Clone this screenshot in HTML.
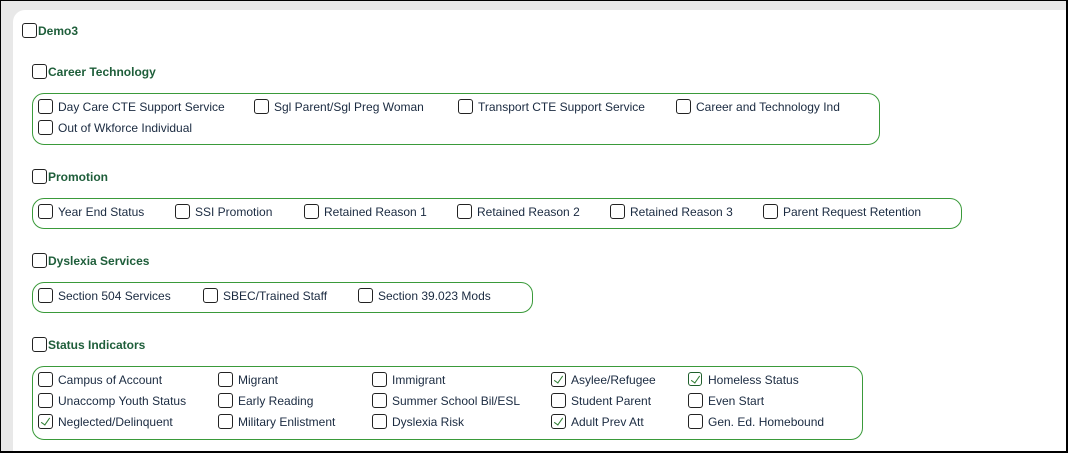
<!DOCTYPE html>
<html><head><style>
html,body{margin:0;padding:0}
body{width:1068px;height:453px;position:relative;overflow:hidden;background:#e8e8e8;font-family:"Liberation Sans",sans-serif;}
.frame{position:absolute;left:0;top:0;border:1px solid #000;border-right:2px solid #000;border-bottom:2px solid #000;box-sizing:border-box;width:1068px;height:453px;}
.panel{position:absolute;left:13px;top:10px;width:1053px;height:441px;background:#fff;border-top-left-radius:12px;}
.cb{position:absolute;width:13px;height:13px;border:1px solid #222;border-radius:3px;background:#fff;}
.cb.on::after{content:"";position:absolute;left:4px;top:1px;width:4px;height:8px;border:solid #2e7d32;border-width:0 1.5px 1.5px 0;transform:rotate(35deg);}
.cb.dk{border-color:#1e5e2a;border-width:1.5px;width:12px;height:12px}
.h{position:absolute;font-size:12px;font-weight:bold;color:#1e5e3a;line-height:14px}
.l{position:absolute;font-size:12px;color:#1a2a40;line-height:14px;white-space:nowrap}
.box{position:absolute;border:1px solid #3a9a3a;border-radius:12px;box-sizing:border-box}
</style></head><body>
<div class="panel"></div>
<div class="frame"></div>
<div id="c"></div>
<script>
var H='';
function cb(x,y,cls){H+='<div class="cb '+(cls||'')+'" style="left:'+x+'px;top:'+(y-8)+'px"></div>';}
function hd(x,y,t){cb(x,y);H+='<div class="h" style="left:'+(x+16)+'px;top:'+(y-7)+'px">'+t+'</div>';}
function it(x,y,t,c){cb(x,y,c);H+='<div class="l" style="left:'+(x+20)+'px;top:'+(y-7)+'px">'+t+'</div>';}
function box(x1,y1,x2,y2){H+='<div class="box" style="left:'+x1+'px;top:'+y1+'px;width:'+(x2-x1)+'px;height:'+(y2-y1)+'px"></div>';}
hd(22,31,'Demo3');
hd(32,72,'Career Technology');
box(32,93,880,145);
it(38,107,'Day Care CTE Support Service');it(254,107,'Sgl Parent/Sgl Preg Woman');it(458,107,'Transport CTE Support Service');it(676,107,'Career and Technology Ind');
it(38,128,'Out of Wkforce Individual');
hd(32,177,'Promotion');
box(32,198,962,229);
[[38,'Year End Status'],[175,'SSI Promotion'],[304,'Retained Reason 1'],[457,'Retained Reason 2'],[610,'Retained Reason 3'],[763,'Parent Request Retention']].forEach(function(a){it(a[0],212,a[1]);});
hd(32,261,'Dyslexia Services');
box(32,282,533,313);
[[38,'Section 504 Services'],[203,'SBEC/Trained Staff'],[358,'Section 39.023 Mods']].forEach(function(a){it(a[0],296,a[1]);});
hd(32,345,'Status Indicators');
box(32,366,863,440);
var cols=[38,218,372,551,688];
var rows=[[['Campus of Account'],['Migrant'],['Immigrant'],['Asylee/Refugee','on'],['Homeless Status','on dk']],
[['Unaccomp Youth Status'],['Early Reading'],['Summer School Bil/ESL'],['Student Parent'],['Even Start']],
[['Neglected/Delinquent','on'],['Military Enlistment'],['Dyslexia Risk'],['Adult Prev Att','on'],['Gen. Ed. Homebound']]];
rows.forEach(function(r,i){r.forEach(function(a,j){it(cols[j],380+21*i,a[0],a[1]);});});
document.getElementById('c').innerHTML=H;
</script>
</body></html>
